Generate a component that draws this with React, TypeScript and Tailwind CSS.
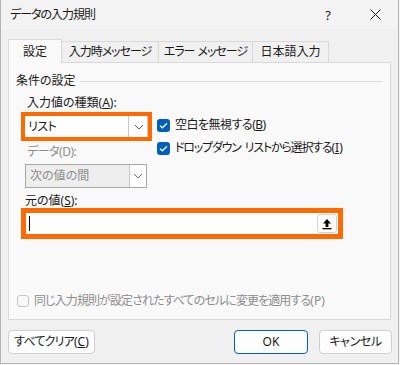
const Chevron = ({ color = '#5c5c5c' }: { color?: string }) => (
  <svg width="10" height="6" viewBox="0 0 10 6">
    <path d="M1 1l4 4 4-4" fill="none" stroke={color} strokeWidth="1" />
  </svg>
);

const Check = () => (
  <span className="shrink-0 w-[13px] h-[13px] rounded-[3px] bg-[#005fb8] flex items-center justify-center">
    <svg width="9" height="7" viewBox="0 0 9 7">
      <path d="M1 3.6l2.3 2.2L8 1.2" fill="none" stroke="#fff" strokeWidth="1.3" />
    </svg>
  </span>
);

const Upload = () => (
  <svg width="10" height="12" viewBox="0 0 10 12">
    <path d="M5 1L1 5.5h2.6V9h2.8V5.5H9z" fill="#000" />
    <rect x="0.5" y="10" width="9" height="1.3" fill="#000" />
  </svg>
);

export default function App() {
  return (
    <div className="w-[400px] h-[365px] bg-[#f6f6f6] text-[12px] leading-[16px] text-[#1a1a1a] font-['Noto_Sans','Noto_Sans_CJK_JP',sans-serif] [font-feature-settings:'palt']">
      <div className="w-[399px] h-[364px] flex flex-col bg-[#f0f0f0] border-x border-b border-[#b4b4b4]">
        {/* title bar */}
        <div className="h-[29px] shrink-0 bg-[#f3f3f3] flex items-center pl-[9px]">
          <span className="tracking-[-1px]">データの入力規則</span>
          <span className="ml-auto text-[13px] w-[12px] text-center">?</span>
          <svg className="ml-[36px] mr-[17px]" width="11" height="11" viewBox="0 0 11 11">
            <path d="M0.5 0.5l10 10M10.5 0.5l-10 10" stroke="#1a1a1a" strokeWidth="1" />
          </svg>
        </div>

        {/* tabs */}
        <div className="mt-[10px] ml-[7px] flex items-end h-[23px]">
          <div className="relative z-10 -mb-px h-[24px] w-[54px] bg-[#f9f9f9] border-x border-t border-[#d9d9d9] flex items-center justify-center">
            設定
          </div>
          <div className="h-[21px] w-[97px] border-t border-r border-[#d9d9d9] flex items-center justify-center tracking-[-1px]">
            入力時メッセージ
          </div>
          <div className="h-[21px] w-[94px] border-t border-r border-[#d9d9d9] flex items-center justify-center tracking-[-1px]">
            エラー<span className="ml-[3px]">メッセージ</span>
          </div>
          <div className="h-[21px] w-[76px] border-t border-r border-[#d9d9d9] flex items-center justify-center">
            日本語入力
          </div>
        </div>

        {/* panel */}
        <div className="ml-[7px] w-[383px] h-[258px] shrink-0 border border-[#d9d9d9] bg-[#f9f9f9] flex flex-col">
          <div className="mt-[10px] pl-[7px] pr-[8px] flex items-center">
            <span>条件の設定</span>
            <span className="flex-1 h-px bg-[#dcdcdc] ml-[4px]" />
          </div>

          <div className="mt-[6px] pl-[18px]">入力値の種類(<u>A</u>):</div>

          <div className="flex mt-px pl-[12px]">
            <div className="w-[131px] shrink-0 flex flex-col">
              <div className="w-[131px] h-[29px] border-[4px] border-[#ff6a00] bg-white flex">
                <div className="flex-1 flex items-center pl-[3px] mr-[2px] border-r border-[#c8c8c8] tracking-[-0.5px]">リスト</div>
                <div className="w-[17px] flex items-center justify-center bg-white border-r border-[#c8c8c8]">
                  <Chevron />
                </div>
              </div>
              <div className="mt-[3px] pl-[6px] text-[#8d8d8d] tracking-[-0.5px]">データ(D):</div>
              <div className="mt-[4px] ml-[4px] w-[122px] h-[24px] border border-[#a8a8a8] bg-[#eeeeee] flex">
                <div className="flex-1 flex items-center pl-[4px] text-[#8d8d8d]">次の値の間</div>
                <div className="w-[17px] flex items-center justify-center bg-white border-l border-[#c8c8c8]">
                  <Chevron color="#707070" />
                </div>
              </div>
              <div className="mt-[6px] ml-[4px] leading-[14px] whitespace-nowrap">元の値(<u>S</u>):</div>
              <div className="w-[322px] shrink-0 h-[31px] border-[5px] border-[#ff6a00] bg-white flex items-center">
                <span className="ml-[3px] w-px h-[15px] bg-black" />
                <div className="ml-auto mr-[1px] w-[20px] h-[19px] rounded-[3px] border border-[#d2d2d2] bg-white flex items-center justify-center">
                  <Upload />
                </div>
              </div>
            </div>

            <div className="ml-[5px] pt-[5px] flex flex-col gap-[7px] whitespace-nowrap">
              <label className="flex items-center h-[16px] gap-[5px]">
                <Check />
                <span className="tracking-[-0.5px]">空白を無視する(<u>B</u>)</span>
              </label>
              <label className="flex items-center h-[16px] gap-[5px]">
                <Check />
                <span className="tracking-[-1.2px]">
                  ドロップダウン<span className="ml-[4px]">リストから選択する</span>
                  <span className="tracking-normal">(<u>I</u>)</span>
                </span>
              </label>
            </div>
          </div>

          <div className="mt-auto mb-[10px] pl-[8px] flex items-center h-[16px] gap-[5px] text-[#8d8d8d] whitespace-nowrap">
            <span className="w-[12px] h-[12px] rounded-[3px] border border-[#c4c4c4] bg-[#f9f9f9]" />
            <span className="tracking-[-0.9px]">
              同じ入力規則が設定されたすべてのセルに変更を適用する<span className="tracking-normal">(P)</span>
            </span>
          </div>
        </div>

        {/* buttons */}
        <div className="mt-[10px] ml-[7px] flex h-[24px]">
          <button className="w-[87px] rounded-[4px] border border-[#d0d0d0] bg-[#fdfdfd] flex items-center justify-center tracking-[-0.8px]">
            すべてクリア<span className="tracking-normal">(<u>C</u>)</span>
          </button>
          <button className="ml-[139px] w-[74px] rounded-[4px] border border-[#005fb8] bg-[#fdfdfd] flex items-center justify-center">
            OK
          </button>
          <button className="ml-[11px] w-[73px] rounded-[4px] border border-[#d0d0d0] bg-[#fdfdfd] flex items-center justify-center tracking-[-0.4px]">
            キャンセル
          </button>
        </div>
      </div>
    </div>
  );
}
